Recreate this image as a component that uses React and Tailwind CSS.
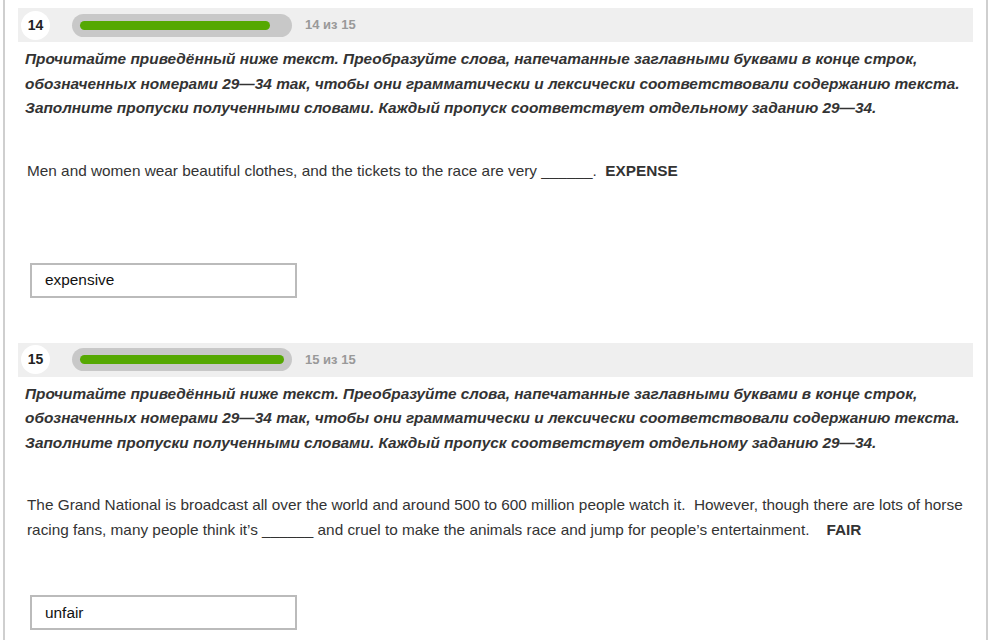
import React from 'react'

const INSTRUCTION =
  'Прочитайте приведённый ниже текст. Преобразуйте слова, напечатанные заглавными буквами в конце строк, обозначенных номерами 29—34 так, чтобы они грамматически и лексически соответствовали содержанию текста. Заполните пропуски полученными словами. Каждый пропуск соответствует отдельному заданию 29—34.'

function TaskHeader({ num, total }) {
  const pct = (num / total) * 100
  return (
    <div className="h-[34px] bg-[#efefef] flex items-center pl-[3px]">
      <div className="w-[29px] h-[29px] rounded-full bg-white flex items-center justify-center text-[14px] font-bold text-[#222]">
        {num}
      </div>
      <div className="ml-[22px] w-[220px] h-[23px] rounded-full bg-[#c8c8c8] flex items-center px-[8px]">
        <div className="h-[9px] rounded-full bg-[#55a802]" style={{ width: `${pct}%` }} />
      </div>
      <span className="ml-[13px] text-[13px] font-bold text-[#999]">
        {num} из {total}
      </span>
    </div>
  )
}

function Task({ num, total, children, answer, inputGap }) {
  return (
    <div>
      <TaskHeader num={num} total={total} />
      <p className="mt-[5px] pl-[7px] pr-[4px] text-[15.4px] leading-[24.5px] font-bold italic text-[#333]">
        {INSTRUCTION}
      </p>
      <p className="mt-[37px] pl-[9px] text-[15.35px] leading-[25px] text-[#333] whitespace-pre-wrap">
        {children}
      </p>
      <div
        className="ml-[12px] w-[267px] h-[35px] border-2 border-[#bbbbbb] flex items-center pl-[13px] text-[15.4px] text-[#111]"
        style={{ marginTop: inputGap }}
      >
        {answer}
      </div>
    </div>
  )
}

export default function App() {
  return (
    <div className="w-[991px] h-[640px] overflow-hidden bg-white font-['Liberation_Sans',Arial,sans-serif]">
      <div className="mx-[3px] h-full border-x-2 border-[#cfcfcf] px-[13px] pt-[8px]">
        <Task num={14} total={15} answer="expensive" inputGap={80}>
          {'Men and women wear beautiful clothes, and the tickets to the race are very ______.  '}
          <b>EXPENSE</b>
        </Task>
        <div className="h-[45px]" />
        <Task num={15} total={15} answer="unfair" inputGap={53}>
          {'The Grand National is broadcast all over the world and around 500 to 600 million people watch it.  However, though there are lots of horse'}
          <br />
          {'racing fans, many people think it’s ______ and cruel to make the animals race and jump for people’s entertainment.    '}
          <b>FAIR</b>
        </Task>
      </div>
    </div>
  )
}
